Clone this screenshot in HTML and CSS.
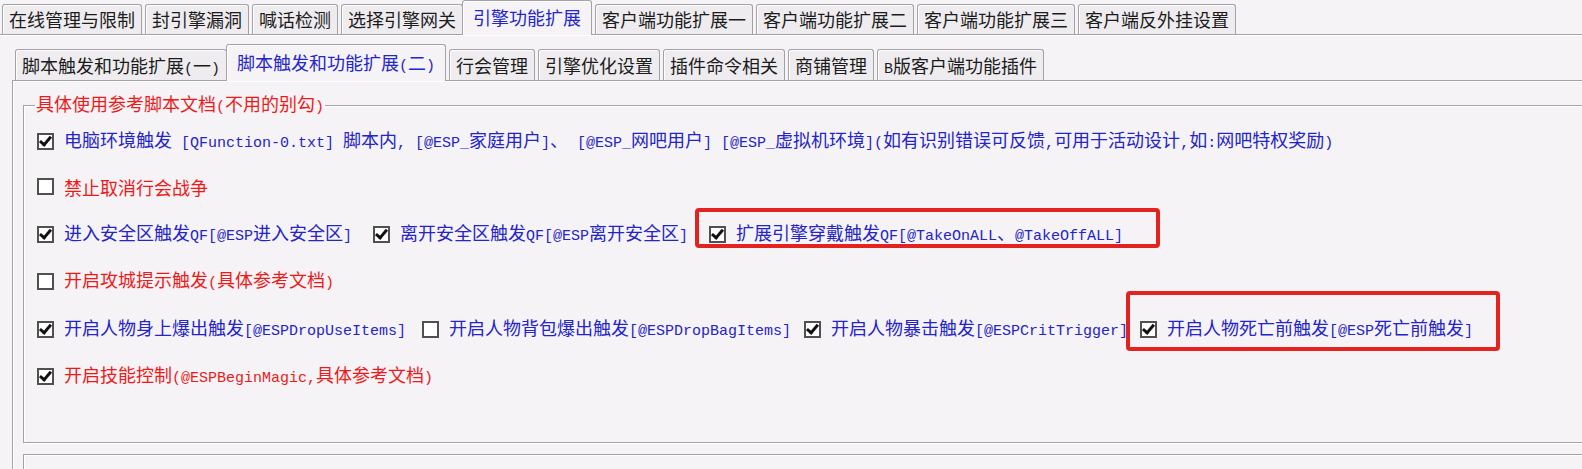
FILE: index.html
```html
<!DOCTYPE html>
<html lang="zh-CN">
<head>
  <meta charset="UTF-8" />
  <title>引擎功能扩展</title>
  <link rel="stylesheet" href="styles.css">
</head>
<body>
  <div class="app">
    <!-- top level tabs -->
    <div class="tabs tabs-main">
      <div class="tab">在线管理与限制</div>
      <div class="tab">封引擎漏洞</div>
      <div class="tab">喊话检测</div>
      <div class="tab">选择引擎网关</div>
      <div class="tab active">引擎功能扩展</div>
      <div class="tab">客户端功能扩展一</div>
      <div class="tab">客户端功能扩展二</div>
      <div class="tab">客户端功能扩展三</div>
      <div class="tab">客户端反外挂设置</div>
    </div>

    <div class="panel">
      <div class="sub">
        <div class="tabs tabs-sub">
          <div class="tab">脚本触发和功能扩展<span class="m">(</span>一<span class="m">)</span></div>
          <div class="tab active">脚本触发和功能扩展<span class="m">(</span>二<span class="m">)</span></div>
          <div class="tab">行会管理</div>
          <div class="tab">引擎优化设置</div>
          <div class="tab">插件命令相关</div>
          <div class="tab">商铺管理</div>
          <div class="tab"><span class="m">B</span>版客户端功能插件</div>
        </div>

        <div class="subpanel">
          <fieldset class="group">
            <legend>具体使用参考脚本文档<span class="m">(</span>不用的别勾<span class="m">)</span></legend>

            <div class="row row-first">
              <label class="check blue"><span class="cb on"></span><span>电脑环境触发<span class="m"> [QFunction-0.txt] </span>脚本内<span class="m">, [@ESP_</span>家庭用户<span class="m">]</span>、<span class="m"> [@ESP_</span>网吧用户<span class="m">] [@ESP_</span>虚拟机环境<span class="m">](</span>如有识别错误可反馈<span class="m">,</span>可用于活动设计<span class="m">,</span>如<span class="m">:</span>网吧特权奖励<span class="m">)</span></span></label>
            </div>

            <div class="row">
              <label class="check red"><span class="cb"></span><span>禁止取消行会战争</span></label>
            </div>

            <div class="row row-safe">
              <label class="check blue"><span class="cb on"></span><span>进入安全区触发<span class="m">QF[@ESP</span>进入安全区<span class="m">]</span></span></label>
              <label class="check blue"><span class="cb on"></span><span>离开安全区触发<span class="m">QF[@ESP</span>离开安全区<span class="m">]</span></span></label>
              <label class="check blue"><span class="cb on"></span><span>扩展引擎穿戴触发<span class="m">QF[@TakeOnALL</span>、<span class="m">@TakeOffALL]</span></span></label>
            </div>

            <div class="row">
              <label class="check red"><span class="cb"></span><span>开启攻城提示触发<span class="m">(</span>具体参考文档<span class="m">)</span></span></label>
            </div>

            <div class="row row-drop">
              <label class="check blue"><span class="cb on"></span><span>开启人物身上爆出触发<span class="m">[@ESPDropUseItems]</span></span></label>
              <label class="check blue"><span class="cb"></span><span>开启人物背包爆出触发<span class="m">[@ESPDropBagItems]</span></span></label>
              <label class="check blue"><span class="cb on"></span><span>开启人物暴击触发<span class="m">[@ESPCritTrigger]</span></span></label>
              <label class="check blue"><span class="cb on"></span><span>开启人物死亡前触发<span class="m">[@ESP</span>死亡前触发<span class="m">]</span></span></label>
            </div>

            <div class="row">
              <label class="check red"><span class="cb on"></span><span>开启技能控制<span class="m">(@ESPBeginMagic,</span>具体参考文档<span class="m">)</span></span></label>
            </div>
          </fieldset>

          <div class="group-next"></div>
        </div>
      </div>
    </div>

    <!-- red annotation boxes -->
    <div class="mark mark-wear"></div>
    <div class="mark mark-death"></div>
  </div>
</body>
</html>
```

FILE: styles.css
```css
:root {
  --bg: #f5f3f6;
  --tab-bg: #eeecef;
  --line: #a5a2a7;
  --blue: #2424c8;
  --red: #ee1a1a;
  --mark: #e3231f;
}

body {
  margin: 0;
  background: var(--bg);
  font-family: "Noto Sans CJK SC", sans-serif;
  font-size: 18px;
  color: #1c1c1c;
  overflow: hidden;
}

.app {
  position: relative;
  width: 1582px;
  height: 469px;
  overflow: hidden;
}

/* half-width latin runs, 9px per glyph like the original bitmap font */
.m {
  font-family: "Liberation Mono", monospace;
  font-size: 15px;
  white-space: pre;
}

/* tabs */
.tabs {
  display: flex;
  align-items: flex-end;
  position: relative;
  z-index: 2;
}

.tab {
  box-sizing: border-box;
  height: 30px;
  line-height: 28px;
  padding: 0 6px;
  margin-right: 3px;
  background: var(--tab-bg);
  border: 1px solid var(--line);
  border-bottom: none;
  border-radius: 3px 3px 0 0;
  box-shadow: inset 1px 1px 0 #fff;
  white-space: nowrap;
}

.tab.active {
  height: 35px;
  line-height: 32px;
  margin-left: -4px;
  margin-bottom: -1px;
  padding: 0 10px;
  background: var(--bg);
  color: #2525cc;
}

.tabs-main {
  height: 30px;
  padding: 4px 0 0 2px;
}

.panel {
  border-top: 1px solid var(--line);
  box-shadow: inset 0 1px 0 #fff;
  padding-top: 14px;
}

.sub {
  margin-left: 12px;
}

.tabs-sub {
  height: 31px;
  padding-left: 3px;
}

.tabs-sub .tab {
  height: 31px;
  line-height: 30px;
}

.tabs-sub .tab.active {
  height: 37px;
  line-height: 34px;
}

.subpanel {
  border-top: 1px solid var(--line);
  border-left: 1px solid var(--line);
  box-shadow: inset 1px 1px 0 #fff;
  padding: 10px 0 0 10px;
}

/* group box */
.group {
  margin: 0 -30px 0 0;
  padding: 0 0 41px 13px;
  border: 1px solid var(--line);
  box-shadow: 1px 1px 0 #fff, inset 1px 1px 0 #fff;
  min-width: 0;
}

.group legend {
  margin-left: -2px;
  padding: 0 1px;
  line-height: 24px;
  color: var(--red);
}

.group-next {
  margin: 11px -30px 0 0;
  height: 30px;
  border-top: 1px solid var(--line);
  border-left: 1px solid var(--line);
  box-shadow: inset 1px 1px 0 #fff;
}

.row {
  display: grid;
  grid-template-columns: auto;
  justify-content: start;
  align-items: center;
  height: 47.5px;
  line-height: 22px;
  white-space: nowrap;
}

.row-first {
  height: 43px;
}

.row-safe {
  grid-template-columns: 336px 336px auto;
}

.row-drop {
  grid-template-columns: 385px 382px 336px auto;
}

.check {
  display: flex;
  align-items: center;
  gap: 10px;
}

.blue { color: var(--blue); }
.red { color: var(--red); }

/* classic checkbox */
.cb {
  position: relative;
  flex: none;
  width: 13px;
  height: 13px;
  border: 2px solid #505050;
  background: #fff;
}

.cb.on::after {
  content: "";
  position: absolute;
  left: 3px;
  top: -1px;
  width: 4px;
  height: 9px;
  border-right: 3px solid #111;
  border-bottom: 3px solid #111;
  transform: rotate(40deg);
}

/* red highlight boxes drawn over the screenshot */
.mark {
  position: absolute;
  box-sizing: border-box;
  border: 4px solid var(--mark);
  border-radius: 4px;
}

.mark-wear {
  left: 695px;
  top: 208px;
  width: 465px;
  height: 40px;
}

.mark-death {
  left: 1126px;
  top: 291px;
  width: 374px;
  height: 60px;
}
```
